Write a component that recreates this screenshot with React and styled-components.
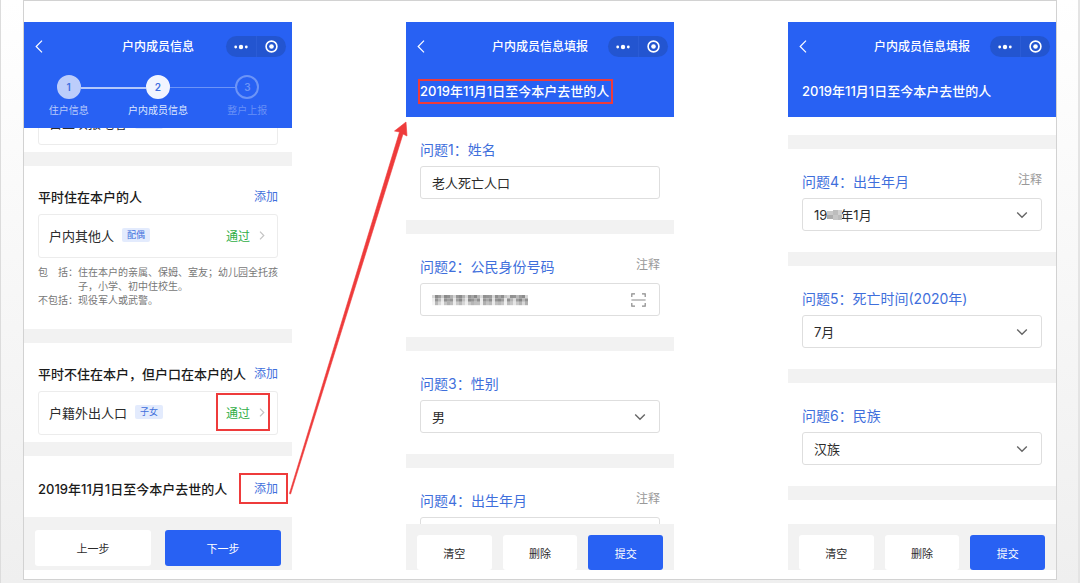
import React from "react";
import styled, { createGlobalStyle, css } from "styled-components";

const BLUE = "#2861f3";
const LINK = "#3f6fdc";
const RED = "#ee3b3b";
const BAND = "#f2f2f2";

const GlobalStyle = createGlobalStyle`
  *, *::before, *::after { box-sizing: border-box; }
  body {
    margin: 0;
    min-height: 100vh;
    background: linear-gradient(#ffffff, #efefef);
    font-family: Inter, "Noto Sans CJK SC", sans-serif;
    font-size: 13px;
    color: #2b2b2b;
    border-left: 1px solid #dcdcdc;
    border-right: 2px solid #e4e4e4;
  }
  h1, h2, h3, p, ol, dl, dd { margin: 0; padding: 0; font-weight: inherit; }
  button, input, select { font-family: inherit; }
`;

const Sheet = styled.main`
  position: relative;
  display: grid;
  grid-template-columns: repeat(3, minmax(0, 1fr));
  column-gap: 114px;
  align-items: start;
  margin: 0 21px 0 22px;
  padding: 21px 0 9px;
  background: #fff;
  border: 1px solid #d2d2d2;
`;

const Phone = styled.section`
  display: flex;
  flex-direction: column;
  background: #fff;
`;

const Header = styled.header`
  background: ${BLUE};
  color: #fff;
  padding-top: 14px;
`;

const Nav = styled.div`
  display: grid;
  grid-template-columns: 60px 1fr 60px;
  align-items: center;
  padding: 0 6px;
`;

const NavTitle = styled.h1`
  font-size: 12px;
  line-height: 20px;
  font-weight: 500;
  text-align: center;
`;

const BackButton = styled.button`
  display: flex;
  width: 18px;
  padding: 0 0 0 5px;
  border: 0;
  background: none;
  color: #fff;
`;

const Capsule = styled.div`
  display: grid;
  grid-template-columns: 1fr 1fr;
  height: 21px;
  border-radius: 11px;
  background: #2355d0;
`;

const CapsuleButton = styled.button`
  display: flex;
  align-items: center;
  justify-content: center;
  padding: 0;
  border: 0;
  background: none;
  color: #fff;
  & + & { border-left: 1px solid #2b5cd6; }
`;

const Heading = styled.h2`
  padding: 24px 14px 16px;
  font-size: 13px;
  line-height: 20px;
  font-weight: 500;
`;

const Marked = styled.span`
  position: relative;
  display: inline-flex;
  align-items: center;
  &::after {
    content: "";
    position: absolute;
    inset: ${(p) => p.$inset};
    border: 2px solid ${RED};
    pointer-events: none;
  }
`;

const Steps = styled.ol`
  display: grid;
  grid-template-columns: repeat(3, 1fr);
  list-style: none;
  padding: 18px 0 11px;
`;

const stepLooks = {
  done: css`
    --fill: #bccdfb; --ring: #bccdfb; --digit: #3f6fe0; --label: #b9cbfb;
  `,
  current: css`
    --fill: #f1f5ff; --ring: #f1f5ff; --digit: #3f6fe0; --label: #dfe8ff;
  `,
  todo: css`
    --fill: transparent; --ring: #6c94f7; --digit: #6c94f7; --label: #6890f6;
  `,
};

const Step = styled.li`
  ${(p) => stepLooks[p.$state]}
  position: relative;
  display: flex;
  flex-direction: column;
  align-items: center;
  gap: 4px;
  font-size: 10px;
  line-height: 14px;
  color: var(--label);
  &:not(:first-child)::before {
    content: "";
    position: absolute;
    top: 12px;
    left: calc(-50% + 12px);
    right: calc(50% + 12px);
    height: ${(p) => (p.$state === "todo" ? 1 : 2)}px;
    background: ${(p) => (p.$state === "todo" ? "#6c94f7" : "#b4c8fb")};
  }
`;

const StepDot = styled.span`
  display: grid;
  place-items: center;
  width: 24px;
  height: 24px;
  border-radius: 50%;
  border: 2px solid var(--ring);
  background: var(--fill);
  color: var(--digit);
  font-weight: 600;
`;

const Group = styled.section`
  padding: ${(p) => p.$top || 21}px 14px ${(p) => p.$bottom || 7}px;
  border-top: 14px solid ${BAND};
`;

const GroupHead = styled.div`
  display: flex;
  justify-content: space-between;
  align-items: center;
  line-height: 20px;
`;

const GroupTitle = styled.h2`
  font-size: 13px;
  font-weight: 500;
  color: #1a1a1a;
  white-space: nowrap;
`;

const AddLink = styled.a`
  font-size: 12px;
  line-height: 18px;
  color: ${LINK};
  text-decoration: none;
  white-space: nowrap;
`;

const Card = styled.a`
  display: flex;
  align-items: center;
  gap: 8px;
  height: 44px;
  margin-top: 7px;
  padding: 0 12px 2px 10px;
  border: 1px solid #ececec;
  border-radius: 3px;
  color: #2b2b2b;
  text-decoration: none;
`;

const ScrolledCard = styled.div`
  display: flex;
  flex-direction: column;
  justify-content: flex-end;
  height: 24px;
  padding: 0 14px 7px;
  overflow: hidden;
  & > ${Card} { flex: none; }
`;

const Tag = styled.span`
  min-width: 28px;
  min-height: 14px;
  padding: 0 5px;
  border-radius: 2px;
  background: #e3ebfd;
  color: ${LINK};
  font-size: 9px;
  line-height: 14px;
`;

const Status = styled.span`
  display: flex;
  align-items: center;
  gap: 9px;
  color: #2fae46;
  font-size: 12px;
`;

const CardEnd = styled.span`
  display: flex;
  margin-left: auto;
`;

const Notes = styled.dl`
  display: grid;
  grid-template-columns: 40px 1fr;
  margin-top: 7px;
  font-size: 10px;
  line-height: 14px;
  color: #777;
`;

const NoteTerm = styled.dt`
  white-space: pre;
`;

const Footer = styled.footer`
  display: grid;
  grid-auto-flow: column;
  grid-auto-columns: 1fr;
  gap: ${(p) => p.$gap}px;
  padding: ${(p) => p.$pad};
  background: ${BAND};
`;

const Button = styled.button`
  height: ${(p) => p.$height || 36}px;
  padding: 0;
  border: 0;
  border-radius: 3px;
  font-size: 11px;
  background: ${(p) => (p.$primary ? BLUE : "#fff")};
  color: ${(p) => (p.$primary ? "#fff" : "#2b2b2b")};
`;

const Question = styled.div`
  padding: 22px 14px 21px;
  & + & { border-top: 14px solid ${BAND}; }
`;

const QuestionHead = styled.div`
  display: flex;
  justify-content: space-between;
  align-items: flex-start;
  margin-bottom: 5px;
`;

const Label = styled.label`
  font-size: 14px;
  line-height: 22px;
  color: ${LINK};
`;

const NoteLink = styled.a`
  font-size: 12px;
  line-height: 18px;
  color: #999;
  text-decoration: none;
`;

const FieldBox = styled.div`
  position: relative;
  display: flex;
`;

const fieldLook = css`
  width: 100%;
  height: 33px;
  padding: 0 11px;
  border: 1px solid #dedede;
  border-radius: 3px;
  background: #fff;
  color: #2b2b2b;
  font-size: 13px;
  appearance: none;
`;

const TextInput = styled.input`${fieldLook}`;
const Select = styled.select`${fieldLook}`;

const FieldIcon = styled.span`
  position: absolute;
  top: 0;
  bottom: 0;
  right: 14px;
  display: flex;
  align-items: center;
  color: #666;
  pointer-events: none;
`;

const FieldMask = styled.span`
  position: absolute;
  top: 0;
  bottom: 0;
  left: ${(p) => p.$left}px;
  display: flex;
  align-items: center;
  pointer-events: none;
`;

const PartialQuestion = styled(Question)`
  height: 70px;
  padding-bottom: 0;
  overflow: hidden;
`;

const Spacer = styled.div`
  height: ${(p) => p.$height}px;
  & + ${Question} { border-top: 14px solid ${BAND}; }
  ${Question} + & { border-top: 14px solid ${BAND}; }
`;

const Arrow = styled.svg`
  position: absolute;
  top: 0;
  left: 0;
  width: 100%;
  aspect-ratio: 1032 / 580;
  pointer-events: none;
`;

const BackIcon = () => (
  <svg width="8" height="13" viewBox="0 0 8 13" fill="none" stroke="currentColor" strokeWidth="1.2">
    <path d="M7 .7 1.2 6.5 7 12.3" />
  </svg>
);

const MoreIcon = () => (
  <svg width="14" height="6" viewBox="0 0 14 6" fill="currentColor">
    <circle cx="1.7" cy="3" r="1.4" />
    <circle cx="7" cy="3" r="2.2" />
    <circle cx="12.3" cy="3" r="1.4" />
  </svg>
);

const TargetIcon = () => (
  <svg width="13" height="13" viewBox="0 0 13 13">
    <circle cx="6.5" cy="6.5" r="5.4" fill="none" stroke="currentColor" strokeWidth="1.6" />
    <circle cx="6.5" cy="6.5" r="2.3" fill="currentColor" />
  </svg>
);

const ChevronRight = () => (
  <svg width="6" height="9" viewBox="0 0 6 9" fill="none" stroke="#c4c4c4" strokeWidth="1.2">
    <path d="M1 .7 4.8 4.5 1 8.3" />
  </svg>
);

const ChevronDown = () => (
  <svg width="12" height="8" viewBox="0 0 12 8" fill="none" stroke="currentColor" strokeWidth="1.4">
    <path d="M1.2 1.4 6 6.2l4.8-4.8" />
  </svg>
);

const ScanIcon = () => (
  <svg width="15" height="14" viewBox="0 0 15 14" fill="none" stroke="#8a8a8a" strokeWidth="1.2">
    <path d="M.8 4V.8H4M11 .8h3.2V4M.8 10v3.2H4M11 13.2h3.2V10M.4 7h14.2" />
  </svg>
);

const idShades = [
  "d8 8b 9c c8 8a 92 b0 d4 96 8c b0 d8 92 a4 88 b8 d9 90 96 9a d6 90 a6 8e c4 d4 90 94 b8 9a 8c d6",
  "ee 94 b8 e6 90 a0 94 e4 a0 88 c0 e4 8a 94 b0 90 ec 94 a8 8e e0 94 8a 9e e8 90 b4 dc 9c 86 b6 92",
  "f4 b8 d8 f0 c4 b0 bc ec ca b8 d6 ee c8 b6 c0 c0 ee b0 c4 ba ea c0 b8 c6 f0 bc c8 e6 c8 b4 d8 b0",
].map((row) => row.split(" "));

const IdMosaic = () => (
  <svg width="98" height="12" viewBox="0 0 98 12">
    {idShades.map((row, y) =>
      row.map((s, x) => (
        <rect key={`${x}-${y}`} x={1 + x * 3} y={1 + y * 3.4} width="3" height="3.4" fill={`#${s}${s}${s}`} />
      ))
    )}
  </svg>
);

const YearMosaic = () => (
  <svg width="16" height="12" viewBox="0 0 16 12">
    <rect x="0" y="2" width="6" height="4" fill="#c9c9c9" />
    <rect x="0" y="6" width="6" height="4" fill="#adadad" />
    <rect x="6" y="1" width="5" height="5" fill="#bdbdbd" />
    <rect x="6" y="6" width="5" height="5" fill="#c6c6c6" />
    <rect x="11" y="1" width="4" height="5" fill="#d2d2d2" />
    <rect x="11" y="6" width="4" height="5" fill="#bcbcbc" />
  </svg>
);

const NavBar = ({ title }) => (
  <Nav>
    <BackButton aria-label="返回"><BackIcon /></BackButton>
    <NavTitle>{title}</NavTitle>
    <Capsule>
      <CapsuleButton aria-label="更多"><MoreIcon /></CapsuleButton>
      <CapsuleButton aria-label="关闭"><TargetIcon /></CapsuleButton>
    </Capsule>
  </Nav>
);

const PersonCard = ({ name, tag, passed, marked }) => {
  const status = passed && <Status>通过<ChevronRight /></Status>;
  return (
    <Card href="#person">
      <span>{name}</span>
      <Tag>{tag}</Tag>
      <CardEnd>{marked ? <Marked $inset="-11px -5px -10px -10px">{status}</Marked> : status}</CardEnd>
    </Card>
  );
};

const QuestionTop = ({ id, label, note }) => (
  <QuestionHead>
    <Label htmlFor={id}>{label}</Label>
    {note && <NoteLink href="#note">注释</NoteLink>}
  </QuestionHead>
);

const SelectQuestion = ({ id, label, value, note, mask, as: Wrapper = Question }) => (
  <Wrapper>
    <QuestionTop id={id} label={label} note={note} />
    <FieldBox>
      <Select id={id} defaultValue={value}>
        <option>{value}</option>
      </Select>
      {mask && <FieldMask $left={25}>{mask}</FieldMask>}
      <FieldIcon><ChevronDown /></FieldIcon>
    </FieldBox>
  </Wrapper>
);

const FormActions = () => (
  <Footer $gap={11} $pad="11px 11px 0">
    <Button $height={35}>清空</Button>
    <Button $height={35}>删除</Button>
    <Button $height={35} $primary>提交</Button>
  </Footer>
);

const DECEASED = "2019年11月1日至今本户去世的人";

export default function App() {
  return (
    <>
      <GlobalStyle />
      <Sheet>
        <Phone>
          <Header>
            <NavBar title="户内成员信息" />
            <Steps>
              <Step $state="done"><StepDot>1</StepDot>住户信息</Step>
              <Step $state="current"><StepDot>2</StepDot>户内成员信息</Step>
              <Step $state="todo"><StepDot>3</StepDot>整户上报</Step>
            </Steps>
          </Header>
          <ScrolledCard>
            <PersonCard name="自主填报地者" />
          </ScrolledCard>
          <Group $bottom={22}>
            <GroupHead>
              <GroupTitle>平时住在本户的人</GroupTitle>
              <AddLink href="#add">添加</AddLink>
            </GroupHead>
            <PersonCard name="户内其他人" tag="配偶" passed />
            <Notes>
              <NoteTerm>包　括：</NoteTerm>
              <dd>住在本户的亲属、保姆、室友；幼儿园全托孩子，小学、初中住校生。</dd>
              <NoteTerm>不包括：</NoteTerm>
              <dd>现役军人或武警。</dd>
            </Notes>
          </Group>
          <Group>
            <GroupHead>
              <GroupTitle>平时不住在本户，但户口在本户的人</GroupTitle>
              <AddLink href="#add">添加</AddLink>
            </GroupHead>
            <PersonCard name="户籍外出人口" tag="子女" passed marked />
          </Group>
          <Group $top={23} $bottom={18}>
            <GroupHead>
              <GroupTitle>{DECEASED}</GroupTitle>
              <Marked $inset="-7px -10px -6px -15px">
                <AddLink href="#add">添加</AddLink>
              </Marked>
            </GroupHead>
          </Group>
          <Footer $gap={14} $pad="13px 11px 4px">
            <Button>上一步</Button>
            <Button $primary>下一步</Button>
          </Footer>
        </Phone>

        <Phone>
          <Header>
            <NavBar title="户内成员信息填报" />
            <Heading><Marked $inset="-2px -4px -3px -2px">{DECEASED}</Marked></Heading>
          </Header>
          <Question>
            <QuestionTop id="name" label="问题1：姓名" />
            <FieldBox><TextInput id="name" defaultValue="老人死亡人口" /></FieldBox>
          </Question>
          <Question>
            <QuestionTop id="idno" label="问题2：公民身份号码" note />
            <FieldBox>
              <TextInput id="idno" />
              <FieldMask $left={11}><IdMosaic /></FieldMask>
              <FieldIcon><ScanIcon /></FieldIcon>
            </FieldBox>
          </Question>
          <SelectQuestion id="sex" label="问题3：性别" value="男" />
          <SelectQuestion as={PartialQuestion} id="birth" label="问题4：出生年月" value="" note />
          <FormActions />
        </Phone>

        <Phone>
          <Header>
            <NavBar title="户内成员信息填报" />
            <Heading>{DECEASED}</Heading>
          </Header>
          <Spacer $height={18} />
          <SelectQuestion id="birth-month" label="问题4：出生年月" value={"19\u2003年1月"} note mask={<YearMosaic />} />
          <SelectQuestion id="death" label="问题5：死亡时间(2020年)" value="7月" />
          <SelectQuestion id="ethnic" label="问题6：民族" value="汉族" />
          <Spacer $height={38} />
          <FormActions />
        </Phone>

        <Arrow viewBox="0 0 1032 580" aria-hidden="true">
          <path d="M265.4 492.6 375.5 131l-5-1 11.5-9 1 14-4-2L266.6 493Z" fill={RED} stroke={RED} strokeWidth=".6" />
        </Arrow>
      </Sheet>
    </>
  );
}
